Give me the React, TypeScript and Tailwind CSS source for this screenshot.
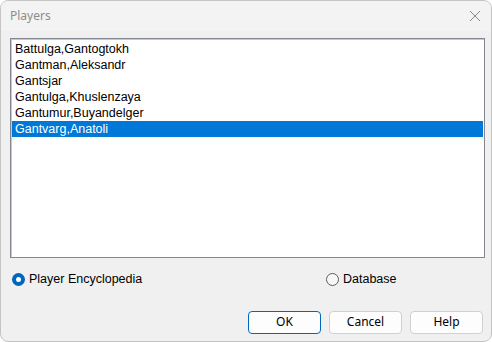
const players = [
  'Battulga,Gantogtokh',
  'Gantman,Aleksandr',
  'Gantsjar',
  'Gantulga,Khuslenzaya',
  'Gantumur,Buyandelger',
  'Gantvarg,Anatoli',
];

function Radio({ checked, label }: { checked: boolean; label: string }) {
  return (
    <label className="flex items-center gap-[4px]">
      {checked ? (
        <span className="w-[13px] h-[13px] rounded-full bg-[#0067c0] flex items-center justify-center">
          <span className="w-[5px] h-[5px] rounded-full bg-white" />
        </span>
      ) : (
        <span className="w-[13px] h-[13px] rounded-full border border-[#5c5c5c] bg-[#f7f7f7]" />
      )}
      <span className="text-[12.5px] text-black font-['Liberation_Sans',sans-serif]">{label}</span>
    </label>
  );
}

function Button({ label, primary }: { label: string; primary?: boolean }) {
  return (
    <button
      className={`w-[73px] h-[23px] rounded-[4px] bg-[#fdfdfd] text-[12px] text-black font-['Noto_Sans',sans-serif] ${
        primary ? 'border border-[#0067c0]' : 'border border-[#d0d0d0]'
      }`}
    >
      {label}
    </button>
  );
}

export default function App() {
  return (
    <div className="w-[492px] h-[342px] bg-white">
      <div className="w-[492px] h-[342px] rounded-[8px] border border-[#c4c4c4] bg-[#f0f0f0] overflow-hidden flex flex-col">
        <div className="h-[30px] bg-[#f3f3f3] flex items-center justify-between pl-[9px] pr-[8px]">
          <span className="text-[12px] text-[#8c8c8c] font-['Noto_Sans',sans-serif]">Players</span>
          <svg width="12" height="12" viewBox="0 0 12 12" className="mr-[2px]">
            <path d="M1 1L11 11M11 1L1 11" stroke="#8a8a8a" strokeWidth="1" />
          </svg>
        </div>
        <div className="flex-1 flex flex-col px-[9px] pt-[7px]">
          <div className="h-[220px] mr-[-3px] bg-white border border-[#828790] shadow-[inset_1px_1px_0_#c8c8c8] pt-[2px] px-[1px]">
            {players.map((p, i) => (
              <div
                key={p}
                className={`h-[16px] leading-[16px] pl-[3px] text-[12.5px] font-['Liberation_Sans',sans-serif] ${
                  i === players.length - 1 ? 'bg-[#0078d7] text-white' : 'text-black'
                }`}
              >
                {p}
              </div>
            ))}
          </div>
          <div className="flex items-center mt-[12px] pl-[2px]">
            <div className="w-[314px]">
              <Radio checked label="Player Encyclopedia" />
            </div>
            <Radio checked={false} label="Database" />
          </div>
          <div className="flex justify-end gap-[8px] mt-[22px] mr-[-1px]">
            <Button label="OK" primary />
            <Button label="Cancel" />
            <Button label="Help" />
          </div>
        </div>
      </div>
    </div>
  );
}
